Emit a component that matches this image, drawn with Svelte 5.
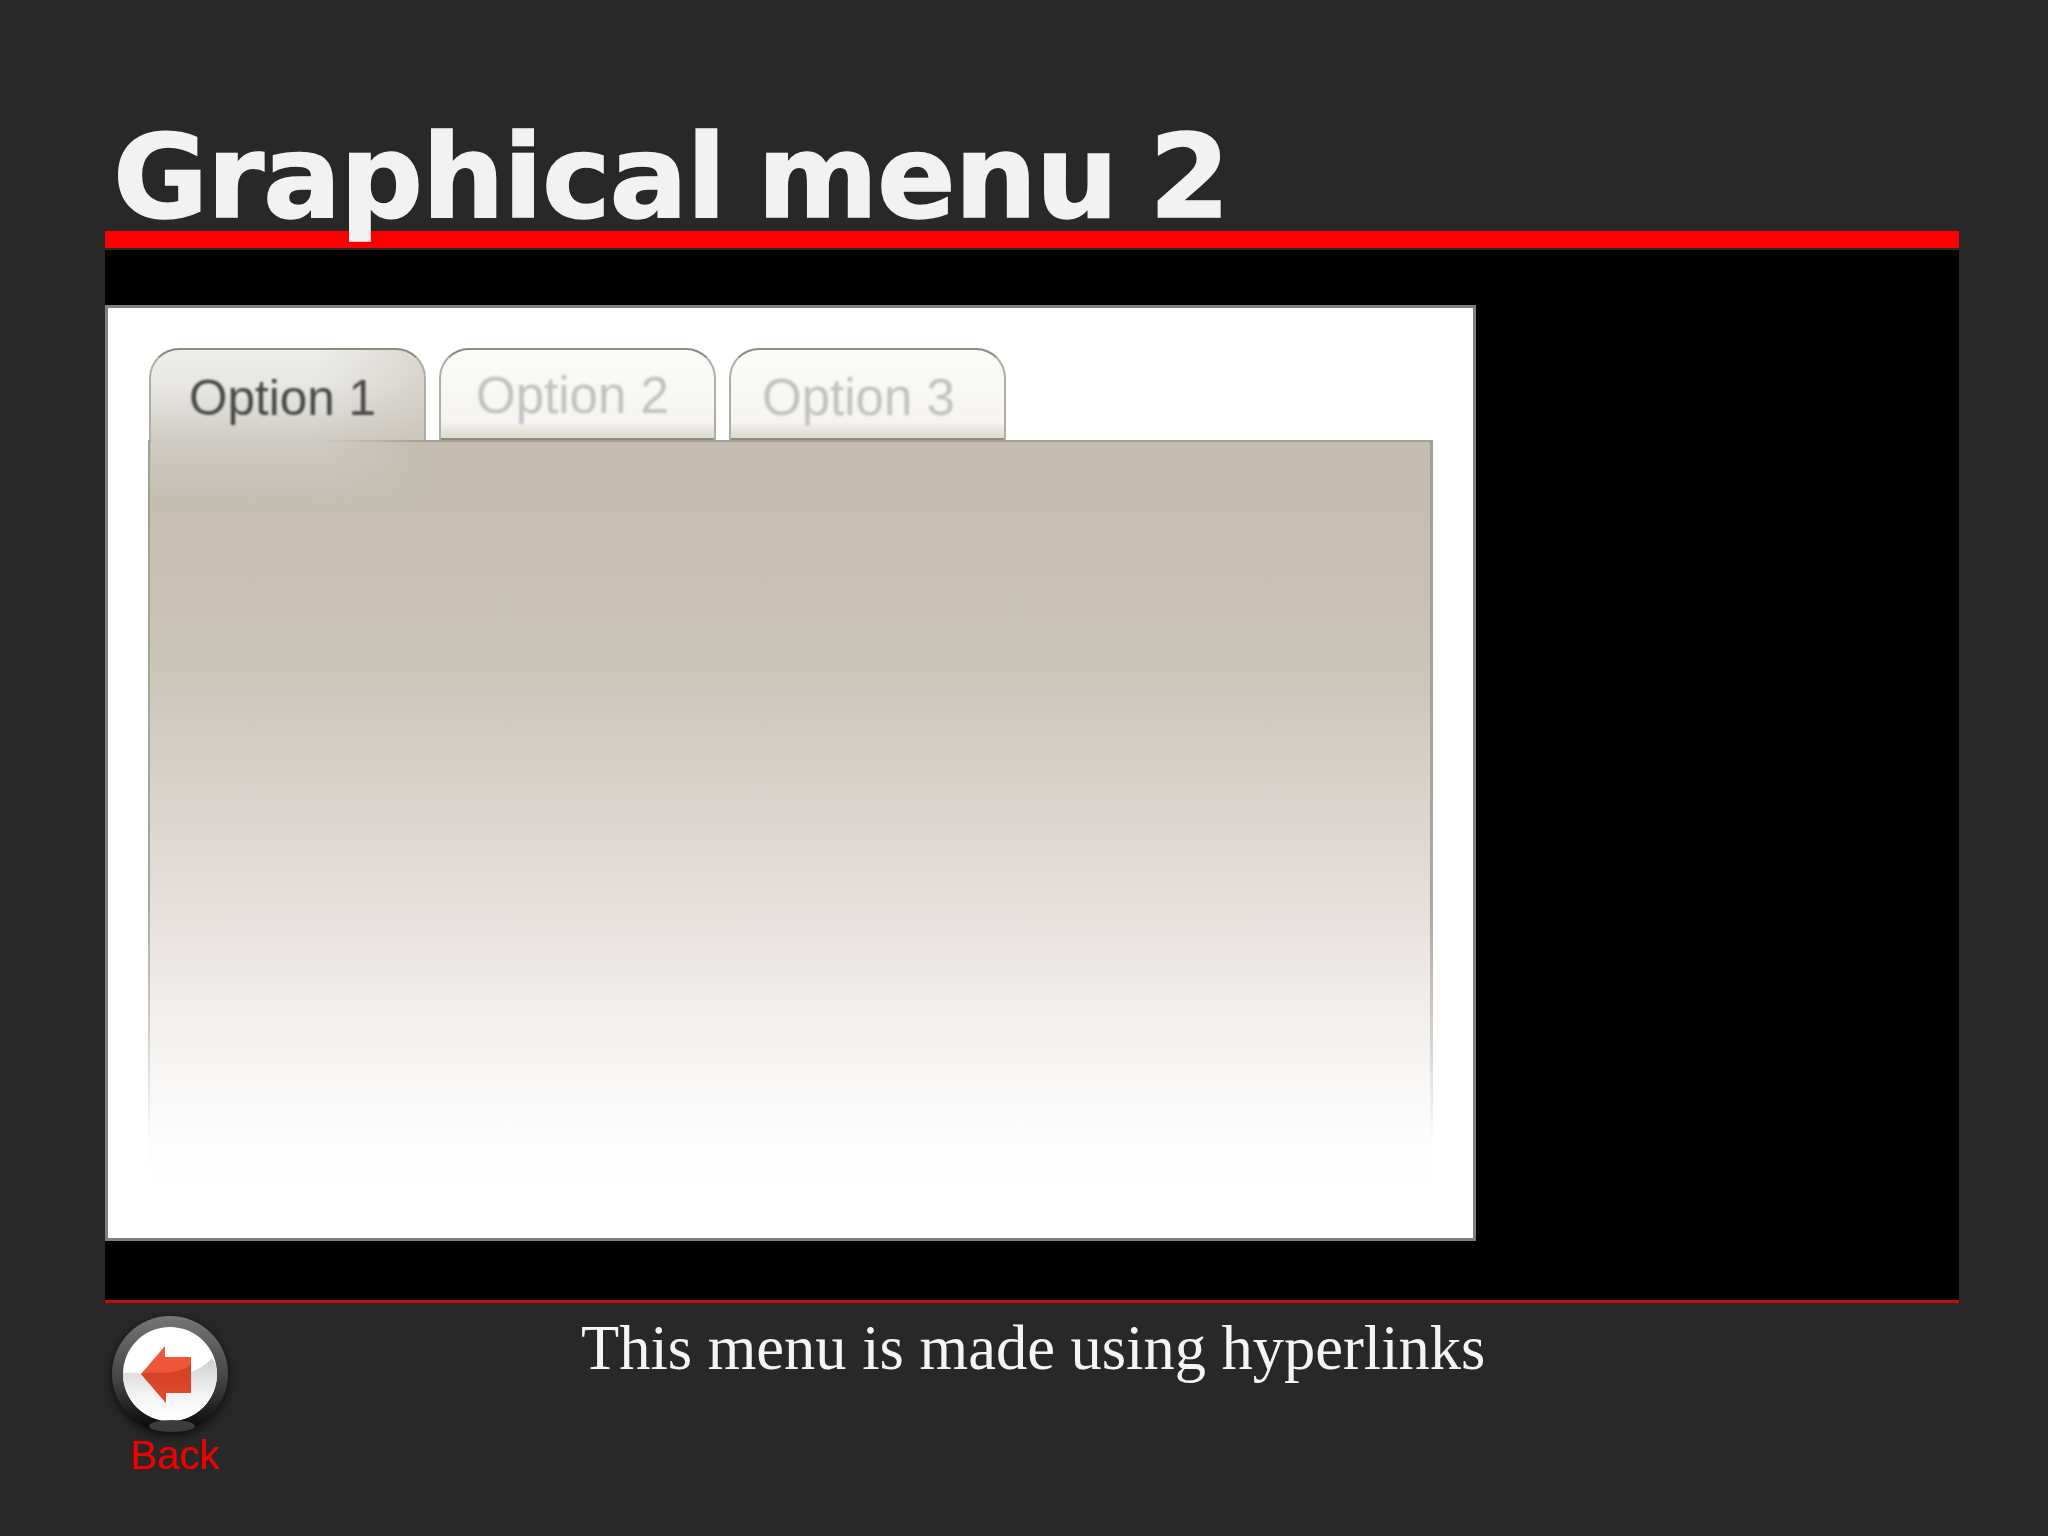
<script>
  let tabs = [
    { label: "Option 1", active: true },
    { label: "Option 2", active: false },
    { label: "Option 3", active: false },
  ];
</script>

<div class="slide">
  <h1>Graphical menu 2</h1>
  <div class="rule"></div>

  <div class="stage">
    <div class="shot">
      <div class="tabs">
        {#each tabs as tab}
          <div class="tab" class:active={tab.active}><span>{tab.label}</span></div>
        {/each}
      </div>
      <div class="sheet"></div>
    </div>
  </div>

  <div class="footer">
    <div class="back">
      <svg class="back-icon" width="124" height="124" viewBox="0 0 124 124">
        <defs>
          <linearGradient id="ring" x1="0" y1="0" x2="0" y2="1">
            <stop offset="0" stop-color="#767676" />
            <stop offset="0.55" stop-color="#444444" />
            <stop offset="1" stop-color="#050505" />
          </linearGradient>
          <linearGradient id="lower" x1="0" y1="0" x2="0" y2="1">
            <stop offset="0" stop-color="#cfcfcf" />
            <stop offset="0.6" stop-color="#f4f4f4" />
            <stop offset="1" stop-color="#ffffff" />
          </linearGradient>
          <linearGradient id="arrowTop" x1="0" y1="0" x2="0" y2="1">
            <stop offset="0" stop-color="#f0593c" />
            <stop offset="1" stop-color="#e8502f" />
          </linearGradient>
          <linearGradient id="arrowLow" x1="0" y1="0" x2="0" y2="1">
            <stop offset="0" stop-color="#cf4124" />
            <stop offset="1" stop-color="#e64a2e" />
          </linearGradient>
        </defs>
        <circle cx="62" cy="60" r="58" fill="url(#ring)" />
        <circle cx="62" cy="60" r="47" fill="#ffffff" />
        <path d="M15 59 C35 56 50 66 70 62 C85 59 97 52 104 44 C108 50 109 55 109 60 A47 47 0 0 1 15 60 Z" fill="url(#lower)" />
        <path d="M33 60 L57 32 V43 H83 V79 H58 V89 Z" fill="url(#arrowTop)" />
        <path d="M33 60 C46 56 68 64 83 50 V79 H58 V89 Z" fill="url(#arrowLow)" />
        <ellipse cx="64" cy="112" rx="23" ry="6" fill="#3c3c3c" />
      </svg>
      <span class="back-label">Back</span>
    </div>
    <p class="caption">This menu is made using hyperlinks</p>
  </div>
</div>

<style>
  :global(body) {
    margin: 0;
    background: #282829;
  }

  .slide {
    width: 2048px;
    height: 1536px;
    box-sizing: border-box;
    padding: 0 89px 0 105px;
    background: #282829;
    overflow: hidden;
  }

  h1 {
    position: relative;
    z-index: 1;
    height: 231px;
    margin: 0;
    padding: 112px 0 0 8px;
    box-sizing: border-box;
    font-family: "DejaVu Sans", sans-serif;
    font-weight: 700;
    font-size: 116px;
    line-height: 130px;
    letter-spacing: -1.2px;
    word-spacing: -7px;
    -webkit-text-stroke: 1.5px #f2f2f2;
    color: #f2f2f2;
    white-space: nowrap;
  }

  .rule {
    height: 17px;
    margin-bottom: 2px;
    background: #ff0000;
  }

  .stage {
    height: 1053px;
    box-sizing: border-box;
    padding-top: 55px;
    background: #000000;
    border-bottom: 3px solid #c00d0d;
  }

  .shot {
    width: 1371px;
    height: 936px;
    box-sizing: border-box;
    padding: 40px 40px 0 40px;
    background: #ffffff;
    border: 3px solid #808080;
  }

  .tabs {
    display: flex;
    gap: 13px;
    height: 92px;
    padding-left: 1px;
  }

  .tab {
    width: 277px;
    box-sizing: border-box;
    padding: 18px 0 0 35px;
    border: 2px solid #b0ada2;
    border-top-color: #8e8c80;
    border-bottom: none;
    border-radius: 30px 30px 0 0;
    background: linear-gradient(#fbfbfa 0%, #f5f4f1 80%, #e6e3da 90%, #dcd8cc 100%);
    box-shadow: inset 0 -2px 0 #8f8c80;
    font-family: "Liberation Sans", sans-serif;
    font-size: 51px;
    line-height: 56px;
    color: #c2c2c0;
    white-space: nowrap;
  }

  .tab span {
    display: block;
    filter: blur(0.8px);
  }

  .tab:nth-child(3) {
    padding: 20px 0 0 31px;
  }

  .tab.active {
    padding: 20px 0 0 38px;
    background:
      linear-gradient(to right, rgba(196, 188, 176, 0) 60%, rgba(196, 188, 176, 0.45) 100%),
      linear-gradient(#eeeeec 0%, #e8e7e3 40%, #dbd9d3 72%, #d0ccc4 100%);
    box-shadow: none;
    font-size: 49.5px;
    color: #4a4a4a;
  }

  .sheet {
    position: relative;
    width: 1285px;
    height: 760px;
    background:
      linear-gradient(#a4a294, #a4a294) top / 100% 2px no-repeat,
      linear-gradient(#a09f92 0%, #a8a79c 60%, rgba(200, 200, 195, 0) 92%) right / 3px 100% no-repeat,
      linear-gradient(#a09f92 0%, #a8a79c 60%, rgba(200, 200, 195, 0) 92%) left / 2px 100% no-repeat,
      linear-gradient(#c4bcb0 0%, #c8c0b4 20%, #cdc6bb 32%, #d8d3cb 46%, #e3dcd8 58%, #efebe9 72%, #f8f7f6 84%, #fefefe 95%, #ffffff 100%);
  }

  /* the active tab runs on into the sheet and fades out */
  .sheet::before {
    content: "";
    position: absolute;
    left: 3px;
    top: 0;
    width: 275px;
    height: 64px;
    background: linear-gradient(#d0ccc4, rgba(196, 188, 176, 0));
    -webkit-mask-image: linear-gradient(to right, #000 60%, transparent 100%);
    mask-image: linear-gradient(to right, #000 60%, transparent 100%);
  }

  .footer {
    display: flex;
    height: 233px;
  }

  .back {
    flex: none;
    width: 130px;
    padding-top: 11px;
  }

  .back-icon {
    display: block;
    margin-left: 3px;
    filter: drop-shadow(0 3px 5px rgba(0, 0, 0, 0.7));
  }

  .back-label {
    display: block;
    margin: -6px 0 0 25px;
    font-family: "Liberation Sans", sans-serif;
    font-size: 40px;
    line-height: 46px;
    color: #f00000;
  }

  .caption {
    margin: 9px 0 0 346px;
    font-family: "Liberation Serif", serif;
    font-size: 62.5px;
    line-height: 72px;
    color: #f4f4f4;
    white-space: nowrap;
  }
</style>
